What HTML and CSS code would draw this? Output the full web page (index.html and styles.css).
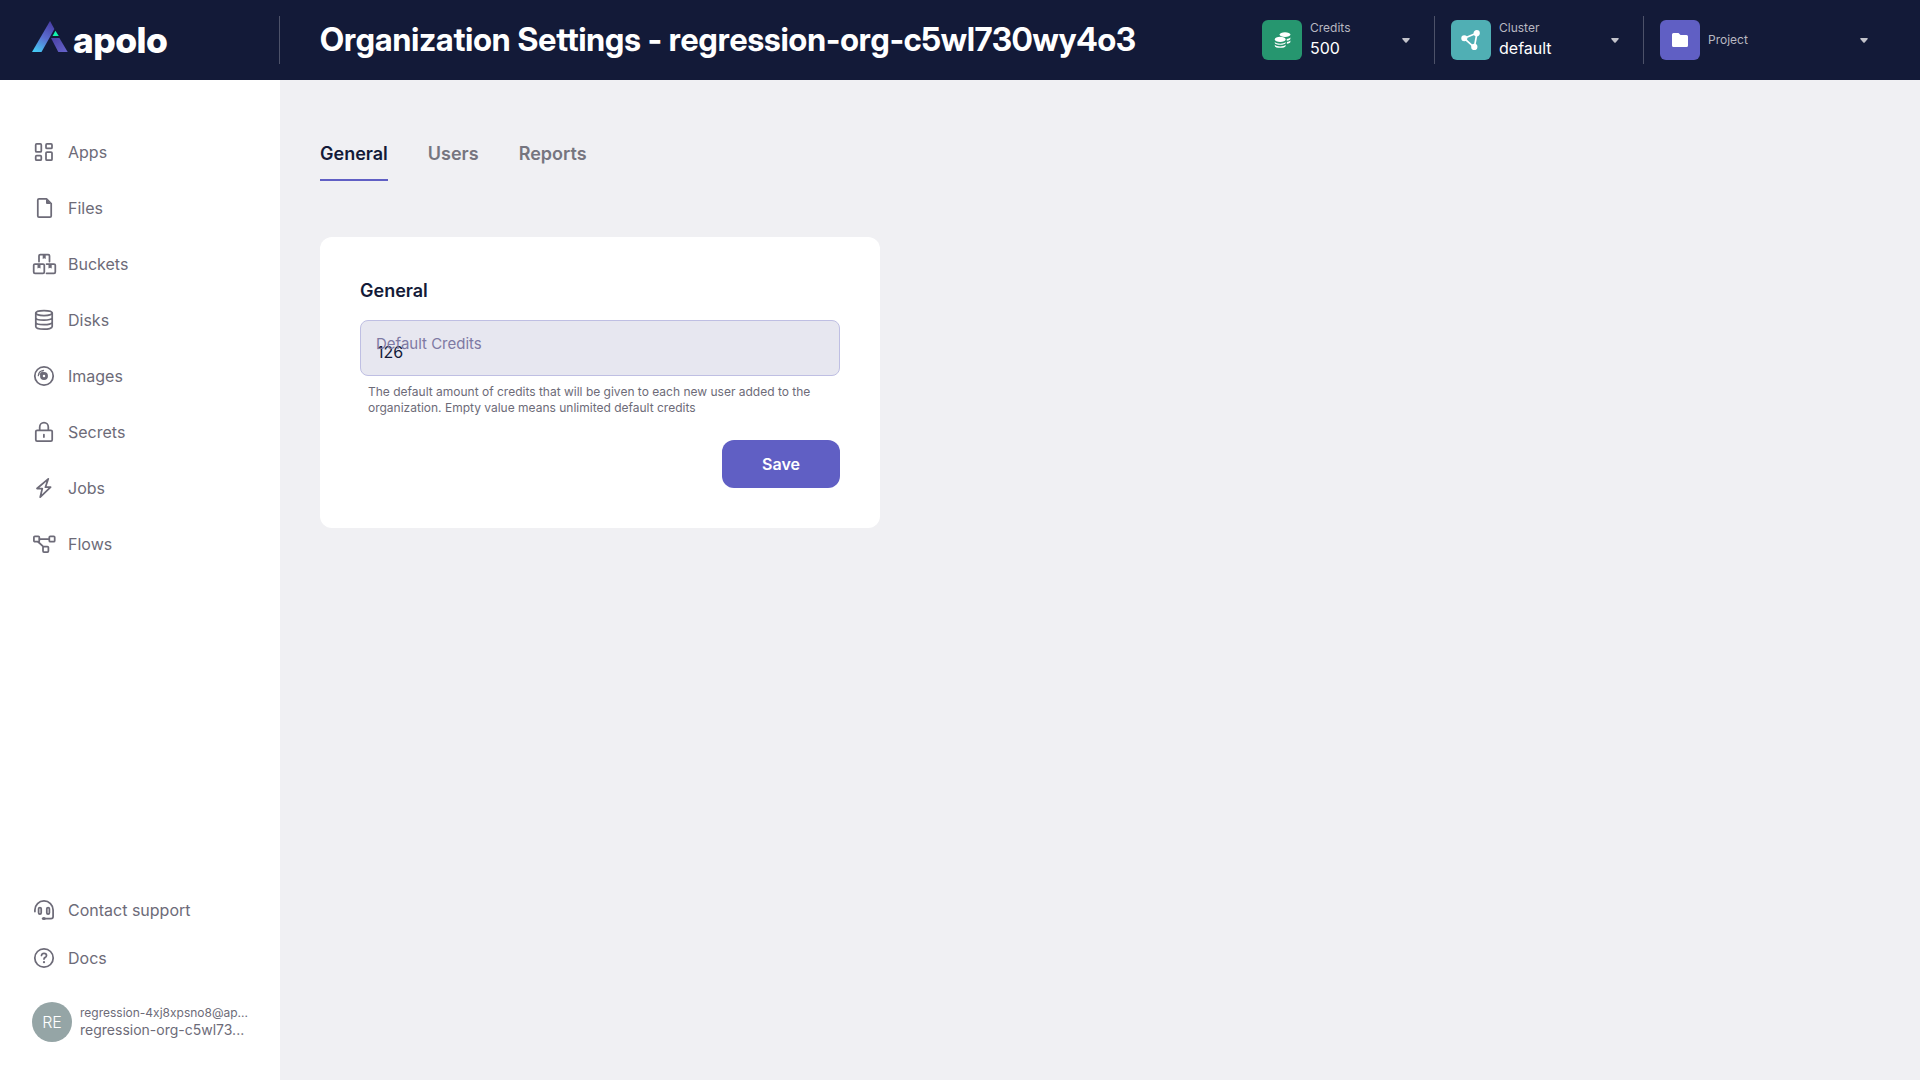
FILE: index.html
```html
<!DOCTYPE html>
<html lang="en">
<head>
<meta charset="utf-8">
<meta name="viewport" content="width=device-width, initial-scale=1">
<title>Organization Settings</title>
<link rel="stylesheet" href="styles.css">
</head>
<body>
<div class="app">
  <header class="header">
    <div class="brand">
      <a class="logo" href="#">
        <svg class="logo-mark" width="36" height="31" viewBox="0 0 36 31" aria-hidden="true">
          <defs>
            <linearGradient id="leg" x1="4" y1="31" x2="20" y2="3" gradientUnits="userSpaceOnUse">
              <stop offset="0" stop-color="#44cbf5"/><stop offset=".5" stop-color="#5a6fd0"/><stop offset="1" stop-color="#4a40a8"/>
            </linearGradient>
            <linearGradient id="foot" x1="22" y1="17" x2="32" y2="31" gradientUnits="userSpaceOnUse">
              <stop offset="0" stop-color="#4c43a8"/><stop offset="1" stop-color="#6360c8"/>
            </linearGradient>
          </defs>
          <path fill="url(#leg)" d="M18 0l4.400 8L9.500 31H0z"/>
          <path fill="#12f5ae" d="M23.400 9.800l3.400 5.200h-6.200z"/>
          <path fill="url(#foot)" d="M19 17h8.400L35.700 31h-9.400z"/>
        </svg>
        <span class="logo-text">apolo</span>
      </a>
    </div>
    <h1 class="title">Organization Settings - regression-org-c5wl730wy4o3</h1>
    <div class="switchers">
      <button class="switcher switcher-credits" type="button">
        <span class="tile tile-green">
          <svg width="18" height="18" viewBox="0 0 18 18" fill="#fff" aria-hidden="true">
            <ellipse cx="12" cy="3.600" rx="5.400" ry="2.400"/>
            <ellipse cx="7.200" cy="8.400" rx="5.400" ry="2.600"/>
            <path d="M1.800 10.900c1.800 2.300 9 2.300 10.800 0v1c0 2.400-10.800 2.400-10.800 0zM1.800 13.700c1.800 2.300 9 2.300 10.800 0v1.200c0 2.600-10.800 2.600-10.800 0zM13.700 8c1.800-.2 3-.7 3.700-1.400v1.200c0 1-1.500 1.700-3.600 2zM13.900 11c1.600-.3 2.800-.8 3.500-1.500v1.200c0 1-1.500 1.600-3.500 2z"/>
          </svg>
        </span>
        <span class="switcher-text"><span class="caption">Credits</span><span class="value">500</span></span>
        <svg class="caret" width="8" height="5" viewBox="0 0 8 5" aria-hidden="true"><path d="M1 0h6q1.400.2.500 1.200L4.700 4.500q-.7.700-1.400 0L.5 1.200Q-.4.200 1 0z"/></svg>
      </button>
      <button class="switcher switcher-cluster" type="button">
        <span class="tile tile-teal">
          <svg width="20" height="20" viewBox="0 0 20 20" fill="#fff" stroke="#fff" stroke-width="1.700" aria-hidden="true">
            <path d="M3.200 8.300L16 3l-2.700 14.300z" fill="none" stroke-linejoin="round"/>
            <circle cx="3.300" cy="8.300" r="2.200"/><circle cx="15.700" cy="3.200" r="2.300"/><circle cx="13.300" cy="17" r="2.300"/>
          </svg>
        </span>
        <span class="switcher-text"><span class="caption">Cluster</span><span class="value">default</span></span>
        <svg class="caret" width="8" height="5" viewBox="0 0 8 5" aria-hidden="true"><path d="M1 0h6q1.400.2.500 1.200L4.700 4.500q-.7.700-1.400 0L.5 1.200Q-.4.200 1 0z"/></svg>
      </button>
      <button class="switcher switcher-project" type="button">
        <span class="tile tile-violet">
          <svg width="16" height="14" viewBox="0 0 16 14" fill="#fff" aria-hidden="true"><path d="M1.500 0h5l2 2h6Q16 2 16 3.500v9q0 1.500-1.500 1.500h-13Q0 14 0 12.500v-11Q0 0 1.500 0z"/></svg>
        </span>
        <span class="switcher-text"><span class="caption">Project</span></span>
        <svg class="caret" width="8" height="5" viewBox="0 0 8 5" aria-hidden="true"><path d="M1 0h6q1.400.2.500 1.200L4.700 4.500q-.7.700-1.400 0L.5 1.200Q-.4.200 1 0z"/></svg>
      </button>
    </div>
  </header>

  <div class="body">
    <aside class="sidebar">
      <nav class="nav">
        <a class="nav-link" href="#">
          <svg class="icon" viewBox="0 0 24 24"><rect x="3.700" y="3.900" width="5.600" height="8" rx="1"/><rect x="14" y="3.900" width="6" height="4.500" rx="1"/><rect x="3.700" y="15.700" width="5.600" height="4.500" rx="1"/><rect x="14" y="12" width="6" height="8.200" rx="1"/></svg>Apps</a>
        <a class="nav-link" href="#">
          <svg class="icon" viewBox="0 0 24 24"><path d="M7 2.800h7.500l4.700 4.700V20q0 1.200-1.200 1.200H7Q5.800 21.200 5.800 20V4Q5.800 2.800 7 2.800z"/><path class="solid" d="M14 3l5 5h-4q-1 0-1-1z"/></svg>Files</a>
        <a class="nav-link" href="#">
          <svg class="icon" viewBox="0 0 24 24"><path d="M7 9.500V4q0-1.300 1.300-1.300h8Q17.500 2.700 17.500 4v5.500"/><rect x="1.700" y="12" width="10.600" height="9.300" rx="1.300"/><path d="M14.500 12H22q1.300 0 1.300 1.300V20q0 1.300-1.300 1.300h-7.500"/><path class="solid" d="M10.700 2.500h3V7l-1.500-.8-1.500.8zM5.500 12h3v4.500L7 15.700l-1.500.8zM16.500 12h3.200v4.500l-1.600-.8-1.600.8z"/></svg>Buckets</a>
        <a class="nav-link" href="#">
          <svg class="icon" viewBox="0 0 24 24"><ellipse cx="12" cy="5" rx="8.200" ry="2.500"/><path d="M3.800 5v13.600c0 3.500 16.400 3.500 16.400 0V5M3.800 9.700c0 3.200 16.400 3.200 16.400 0M3.800 14.300c0 3.200 16.400 3.200 16.400 0"/></svg>Disks</a>
        <a class="nav-link" href="#">
          <svg class="icon" viewBox="0 0 24 24"><circle cx="12" cy="12" r="9.200"/><circle cx="12" cy="12" r="2.600" stroke-width="2.700"/><path stroke-width="1.200" d="M6.300 11.700A6 6 0 0 1 11.500 6.300M8.200 10.500A4.700 4.700 0 0 1 11 8"/></svg>Images</a>
        <a class="nav-link" href="#">
          <svg class="icon" viewBox="0 0 24 24"><rect x="3.800" y="10.300" width="16.400" height="10.700" rx="1.300"/><path d="M7.700 10V7a4.300 4.300 0 0 1 8.600 0v3M11.900 14.500v2.600"/></svg>Secrets</a>
        <a class="nav-link" href="#">
          <svg class="icon" viewBox="0 0 24 24"><path d="M16.300 2.800L5 12.500h5.300L8.200 21.100 18.600 11.200h-5.200z"/></svg>Jobs</a>
        <a class="nav-link" href="#">
          <svg class="icon" viewBox="0 0 24 24"><rect x="1.900" y="4.300" width="5.400" height="5.400" rx="1"/><rect x="17.300" y="4.300" width="5.400" height="5.400" rx="1"/><rect x="11" y="14.600" width="5.400" height="5.400" rx="1"/><path d="M7.500 7h9.600M6.300 10l5 4.700"/></svg>Flows</a>
      </nav>
      <div class="sidebar-foot">
        <nav class="nav nav-support">
          <a class="nav-link" href="#">
            <svg class="icon" viewBox="0 0 24 24"><path d="M2.900 13.500V12a9.100 9.100 0 0 1 18.200 0v6.500q0 2.100-2.100 2.100h-6.500"/><rect x="6.600" y="9.500" width="2.600" height="6.600" rx="1.300"/><rect x="14.800" y="9.500" width="2.600" height="6.600" rx="1.300"/><ellipse class="solid" cx="11.800" cy="20.500" rx="2" ry="1.500"/></svg>Contact support</a>
          <a class="nav-link" href="#">
            <svg class="icon" viewBox="0 0 24 24"><circle cx="12" cy="12" r="9.200"/><path d="M9.500 9.500q.3-2.200 2.500-2.200 2.500 0 2.500 2.100 0 1.300-1.300 2-1.200.6-1.200 1.600"/><circle class="solid" cx="12" cy="16.200" r="1.100"/></svg>Docs</a>
        </nav>
        <a class="account" href="#">
          <span class="avatar">RE</span>
          <span class="account-text"><span class="account-mail">regression-4xj8xpsno8@ap...</span><span class="account-org">regression-org-c5wl73...</span></span>
        </a>
      </div>
    </aside>

    <main class="main">
      <nav class="tabs">
        <a class="tab tab-active" href="#" aria-current="page">General</a>
        <a class="tab" href="#">Users</a>
        <a class="tab" href="#">Reports</a>
      </nav>
      <form class="card">
        <h2 class="card-title">General</h2>
        <div class="field">
          <input class="field-input" id="default-credits" type="text" inputmode="numeric" value="126" aria-describedby="credits-hint">
          <label class="field-label" for="default-credits">Default Credits</label>
        </div>
        <p class="hint" id="credits-hint">The default amount of credits that will be given to each new user added to the organization. Empty value means unlimited default credits</p>
        <button class="save" type="button">Save</button>
      </form>
    </main>
  </div>
</div>
</body>
</html>
```
FILE: styles.css
```css
*, *::before, *::after { box-sizing: border-box; }

body {
  margin: 0;
  font-family: Inter, "Liberation Sans", sans-serif;
  font-size: 16px;
  line-height: 24px;
  color: #131a38;
  background: #f0f0f3;
}

a { color: inherit; text-decoration: none; }
button, input { font: inherit; }

.app { display: flex; flex-direction: column; min-height: 100vh; }

/* Header */
.header {
  display: flex;
  align-items: center;
  height: 80px;
  padding-right: 40px;
  background: #131a38;
  color: #fff;
}
.brand {
  display: flex;
  align-items: center;
  flex: none;
  width: 280px;
  height: 48px;
  padding-left: 32px;
  border-right: 1px solid #4d5269;
}
.logo { display: flex; align-items: center; gap: 5px; }
.logo-mark { margin-bottom: 8px; }
.logo-text {
  font-family: "Inter Display", Inter, sans-serif;
  font-size: 36px;
  font-weight: 800;
  line-height: 40px;
}
.title {
  flex: 1;
  min-width: 0;
  margin: 0;
  padding: 0 40px;
  overflow: hidden;
  font-family: "Inter Display", Inter, sans-serif;
  font-size: 32px;
  font-weight: 700;
  line-height: 40px;
  text-overflow: ellipsis;
  white-space: nowrap;
}
.switchers { display: flex; flex: none; }
.switcher {
  display: flex;
  align-items: center;
  gap: 8px;
  height: 48px;
  padding: 0 24px 0 16px;
  border: 0;
  border-right: 1px solid #4d5269;
  background: none;
  color: inherit;
  text-align: left;
  cursor: pointer;
}
.switcher-credits { width: 189px; }
.switcher-cluster { width: 209px; }
.switcher-project { width: 236px; padding-right: 12px; border-right: 0; }
.tile {
  display: flex;
  align-items: center;
  justify-content: center;
  flex: none;
  width: 40px;
  height: 40px;
  border-radius: 6px;
}
.tile-green { background: #26966f; }
.tile-teal { background: #50afb4; }
.tile-violet { background: #605fc4; }
.switcher-text { display: flex; flex: 1; flex-direction: column; min-width: 0; }
.caption { font-size: 12px; line-height: 16px; color: #b8b8c1; }
.value { line-height: 24px; }
.caret { flex: none; fill: #c3c3cb; }

/* Sidebar */
.body { display: flex; flex: 1; }
.sidebar {
  display: flex;
  flex: none;
  flex-direction: column;
  justify-content: space-between;
  width: 280px;
  padding: 60px 24px 38px 32px;
  background: #fff;
  color: #6d6b78;
}
.nav { display: flex; flex-direction: column; gap: 32px; }
.nav-support { gap: 24px; }
.nav-link { display: flex; align-items: center; gap: 12px; }
.icon {
  flex: none;
  width: 24px;
  height: 24px;
  overflow: visible;
  fill: none;
  stroke: currentColor;
  stroke-width: 1.75;
  stroke-linejoin: round;
  stroke-linecap: round;
}
.icon .solid { fill: currentColor; stroke: none; }
.sidebar-foot { display: flex; flex-direction: column; gap: 32px; }
.account { display: flex; align-items: center; gap: 8px; }
.avatar {
  flex: none;
  width: 40px;
  border-radius: 50%;
  background: #95a5a6;
  color: #fff;
  font-weight: 300;
  line-height: 40px;
  text-align: center;
}
.account-text { display: flex; flex-direction: column; white-space: nowrap; }
.account-mail { font-size: 12px; line-height: 16px; }
.account-org { font-size: 14px; line-height: 18px; }

/* Content */
.main { flex: 1; min-width: 0; padding: 60px 40px; }
.tabs { display: flex; gap: 40px; margin-bottom: 56px; }
.tab {
  padding-bottom: 12px;
  border-bottom: 2px solid transparent;
  color: #76757f;
  font-size: 18px;
  font-weight: 600;
  line-height: 27px;
}
.tab-active { border-color: #605fc4; color: #131a38; }
.card {
  display: flex;
  flex-direction: column;
  max-width: 560px;
  padding: 40px;
  border-radius: 12px;
  background: #fff;
}
.card-title { margin: 0 0 16px; font-size: 18px; font-weight: 600; line-height: 27px; }
.field { position: relative; }
.field-input {
  display: block;
  width: 100%;
  height: 56px;
  padding: 8px 16px 0;
  border: 1px solid #bfbfe3;
  border-radius: 8px;
  outline: 0;
  background: #e7e7f0;
  color: #131a38;
}
.field-label {
  position: absolute;
  top: 12px;
  left: 16px;
  color: #7e79a3;
  font-size: 15px;
  pointer-events: none;
}
.hint { margin: 8px 8px 24px; color: #6d6b78; font-size: 12px; line-height: 16px; }
.save {
  align-self: flex-end;
  height: 48px;
  padding: 0 40px;
  border: 0;
  border-radius: 12px;
  background: #605fc4;
  color: #fff;
  font-weight: 600;
  cursor: pointer;
}
```
